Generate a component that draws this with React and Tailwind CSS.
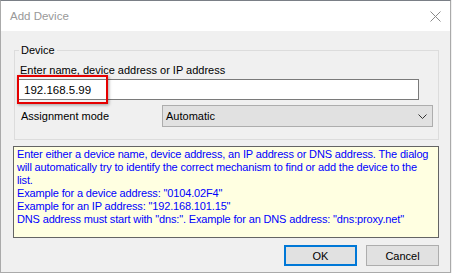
import React from 'react';

// Add Device dialog (Windows 10 style)
export default function App() {
  return (
    <div className="relative w-[452px] h-[273px] overflow-hidden bg-[#f0f0f0] font-['Liberation_Sans',Arial,sans-serif] text-[11px] text-black">
      <div className="w-[451px] h-[273px] flex flex-col border-l border-r border-b border-t border-t-[#7a7f86] border-[#aaaaaa]">
        {/* Title bar */}
        <div className="h-[30px] shrink-0 bg-white flex items-center justify-between pl-[9px] pr-[8px]">
          <span className="text-[11.5px] text-[#999999] leading-[16px]">Add Device</span>
          <svg width="11" height="11" viewBox="0 0 11 11" className="mr-[1px]">
            <path d="M0.5 0.5 L10.5 10.5 M10.5 0.5 L0.5 10.5" stroke="#8a8a8a" strokeWidth="1" fill="none" />
          </svg>
        </div>

        {/* Body */}
        <div className="flex-1 flex flex-col">
          {/* Group box */}
          <div className="relative ml-[13px] mt-[19px] w-[425px] h-[90px] border border-[#dcdcdc] pl-[2px] pt-[11px]">
            <span className="absolute left-[4px] -top-[9px] px-[2px] bg-[#f0f0f0] leading-[16px]">Device</span>
            <div className="pl-[3px] leading-[16px]">Enter name, device address or IP address</div>
            <div className="mt-[1px] w-[402px] h-[21px] border border-[#7a7a7a] bg-white flex items-center pl-[6px] leading-[16px] text-[11.5px]">
              192.168.5.99
            </div>
            <div className="mt-[5px] flex items-center">
              <span className="w-[145px] pl-[4px] leading-[16px]">Assignment mode</span>
              <div className="w-[271px] h-[22px] border border-[#adadad] bg-[#e1e1e1] flex items-center justify-between pl-[3px] pr-[5px]">
                <span className="leading-[16px]">Automatic</span>
                <svg width="9" height="5" viewBox="0 0 9 5">
                  <path d="M0.5 0.5 L4.5 4.5 L8.5 0.5" stroke="#333333" strokeWidth="1" fill="none" />
                </svg>
              </div>
            </div>
          </div>

          {/* Hint box */}
          <div className="ml-[12px] mt-[6px] w-[426px] h-[92px] border border-[#646464] bg-[#ffffe1] px-[3px] pt-[1px] text-[11px] tracking-[-0.15px] leading-[13px] text-[#0000ff]">
            <div>Enter either a device name, device address, an IP address or DNS address. The dialog will automatically try to identify the correct mechanism to find or add the device to the list.</div>
            <div>Example for a device address: "0104.02F4"</div>
            <div>Example for an IP address: "192.168.101.15"</div>
            <div>DNS address must start with "dns:". Example for an DNS address: "dns:proxy.net"</div>
          </div>

          {/* Buttons */}
          <div className="mt-[7px] flex pl-[283px] gap-[9px]">
            <button className="w-[73px] h-[21px] border-2 border-[#0078d7] bg-[#e1e1e1] flex items-center justify-center leading-[16px]">
              OK
            </button>
            <button className="w-[73px] h-[21px] border border-[#adadad] bg-[#e1e1e1] flex items-center justify-center leading-[16px]">
              Cancel
            </button>
          </div>
        </div>
      </div>

      {/* Red annotation rectangle */}
      <div className="absolute left-[17px] top-[75px] w-[91px] h-[29px] border-2 border-[#e50000] shadow-[1px_1px_3px_rgba(0,0,0,0.35)]" />
    </div>
  );
}
